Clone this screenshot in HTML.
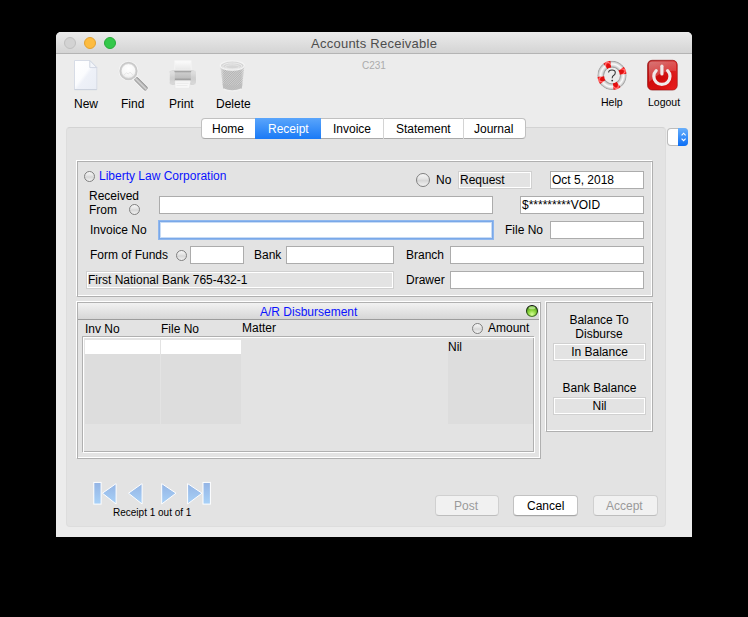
<!DOCTYPE html>
<html><head><meta charset="utf-8">
<style>
*{margin:0;padding:0;box-sizing:border-box}
html,body{width:748px;height:617px;background:#000;overflow:hidden;font-family:"Liberation Sans",sans-serif;font-size:12px;color:#000}
.a{position:absolute}
.t{position:absolute;white-space:nowrap;line-height:12px;font-size:12px}
.s10{font-size:10px;line-height:10px}
.inp{position:absolute;background:#fff;border:1px solid #acacac}
.fld{position:absolute;background:#e3e3e3;border:1px solid #d0d0d0;box-shadow:inset 0 0 0 1px #fff}
.radio{position:absolute;width:11px;height:11px;border-radius:50%;background:linear-gradient(#f6f6f6 0%,#e4e4e4 40%,#d6d6d6 55%,#e6e6e6 80%,#f0f0f0 100%);border:1px solid #808080}
.w{position:absolute;border:1px solid #fff}
.g{position:absolute;border:1px solid #b0b0b0}
.btn{position:absolute;height:20px;border-radius:4px;background:#fff;border:1px solid #c2c2c2;border-bottom-color:#a6a6a6;box-shadow:0 0.5px 0.5px rgba(0,0,0,0.1)}
.dis{background:#f1f1f1;border-color:#d0d0d0;border-bottom-color:#bdbdbd;box-shadow:none}
</style></head>
<body>
<!-- window -->
<div class="a" style="left:56px;top:32px;width:636px;height:505px;background:#ececec;border-radius:5px 5px 0 0;"></div>
<div class="a" style="left:56px;top:32px;width:636px;height:22px;background:linear-gradient(#ebebeb,#d4d4d4);border-bottom:1px solid #b4b4b4;border-radius:5px 5px 0 0"></div>
<div class="a" style="left:64px;top:37px;width:12px;height:12px;border-radius:50%;background:#d3d3d3;border:1px solid #c0c0c0"></div>
<div class="a" style="left:84px;top:37px;width:12px;height:12px;border-radius:50%;background:#fdbc40;border:1px solid #e3a231"></div>
<div class="a" style="left:104px;top:37px;width:12px;height:12px;border-radius:50%;background:#34c84a;border:1px solid #28ab39"></div>
<div class="t" style="left:311px;top:37px;font-size:13px;line-height:13px;color:#4d4d4d;letter-spacing:0.25px">Accounts Receivable</div>
<div class="t s10" style="left:362px;top:61px;color:#ababab">C231</div>

<!-- toolbar labels -->
<div class="t" style="left:74px;top:98px">New</div>
<div class="t" style="left:121px;top:98px">Find</div>
<div class="t" style="left:169px;top:98px">Print</div>
<div class="t" style="left:216px;top:98px">Delete</div>
<div class="t" style="left:601px;top:97px;font-size:10.5px;line-height:10px">Help</div>
<div class="t" style="left:648px;top:97px;font-size:10.5px;line-height:10px">Logout</div>

<!-- inner panel -->
<div class="a" style="left:66px;top:127px;width:600px;height:400px;background:#e3e3e3;border:1px solid #dddddd;border-top-color:#d3d3d3;border-radius:4px"></div>

<!-- popup stepper at right -->
<div class="a" style="left:667px;top:128px;width:21px;height:18px;border-radius:4px;background:#bcbcbc;overflow:hidden">
  <div class="a" style="left:1px;top:1px;width:12px;height:16px;border-radius:3px 0 0 3px;background:#fff"></div>
  <div class="a" style="left:11px;top:0;width:10px;height:18px;background:linear-gradient(#6ab0fb,#0a6ef6)"></div>
  <svg class="a" style="left:11px;top:0" width="10" height="18"><path d="M3.6,7.3 L5.6,5.2 L7.6,7.3 M3.6,10.6 L5.6,12.7 L7.6,10.6" fill="none" stroke="#fff" stroke-width="1.1"/></svg>
</div>

<!-- segmented control -->
<div class="a" style="left:201px;top:118px;width:325px;height:21px;background:#fff;border-radius:4px;border:1px solid #c0c0c0;border-bottom-color:#a9a9a9"></div>
<div class="a" style="left:255px;top:118px;width:66px;height:21px;background:linear-gradient(#5aa5fb,#1a7af6)"></div>
<div class="a" style="left:383px;top:118px;width:1px;height:21px;background:#d4d4d4"></div>
<div class="a" style="left:463px;top:118px;width:1px;height:21px;background:#d4d4d4"></div>
<div class="t" style="left:212px;top:123px">Home</div>
<div class="t" style="left:268px;top:123px;color:#fff">Receipt</div>
<div class="t" style="left:333px;top:123px">Invoice</div>
<div class="t" style="left:396px;top:123px">Statement</div>
<div class="t" style="left:474px;top:123px">Journal</div>

<!-- group box 1 -->
<div class="w" style="left:76px;top:160px;width:576px;height:136px"></div>
<div class="g" style="left:77px;top:161px;width:576px;height:136px"></div>

<div class="radio" style="left:84px;top:171px"></div>
<div class="t" style="left:99px;top:170px;color:#0a14ff">Liberty Law Corporation</div>
<div class="radio" style="left:416px;top:173px;width:14px;height:14px"></div>
<div class="t" style="left:436px;top:174px">No</div>
<div class="fld" style="left:458px;top:171px;width:74px;height:18px"></div>
<div class="t" style="left:460px;top:174px">Request</div>
<div class="inp" style="left:550px;top:171px;width:94px;height:18px"></div>
<div class="t" style="left:552px;top:174px">Oct 5, 2018</div>

<div class="t" style="left:89px;top:190px">Received</div>
<div class="t" style="left:89px;top:204px">From</div>
<div class="radio" style="left:129px;top:204px"></div>
<div class="inp" style="left:159px;top:196px;width:334px;height:18px"></div>
<div class="inp" style="left:520px;top:196px;width:124px;height:18px"></div>
<div class="t" style="left:522px;top:199px">$*********VOID</div>

<div class="t" style="left:90px;top:224px">Invoice No</div>
<div class="inp" style="left:159px;top:221px;width:334px;height:18px;border-color:#7aa8e8;box-shadow:0 0 0 1px #8fb7ee,inset 0 0 0 1px #c8dcf6"></div>
<div class="t" style="left:505px;top:224px">File No</div>
<div class="inp" style="left:550px;top:221px;width:94px;height:18px"></div>

<div class="t" style="left:90px;top:249px">Form of Funds</div>
<div class="radio" style="left:176px;top:250px"></div>
<div class="inp" style="left:190px;top:246px;width:54px;height:18px"></div>
<div class="t" style="left:254px;top:249px">Bank</div>
<div class="inp" style="left:286px;top:246px;width:108px;height:18px"></div>
<div class="t" style="left:406px;top:249px">Branch</div>
<div class="inp" style="left:450px;top:246px;width:194px;height:18px"></div>

<div class="fld" style="left:86px;top:271px;width:308px;height:18px"></div>
<div class="t" style="left:88px;top:274px">First National Bank 765-432-1</div>
<div class="t" style="left:406px;top:274px">Drawer</div>
<div class="inp" style="left:450px;top:271px;width:194px;height:18px"></div>

<!-- A/R box -->
<div class="w" style="left:76px;top:301px;width:464px;height:157px"></div>
<div class="g" style="left:77px;top:302px;width:464px;height:157px"></div>
<div class="a" style="left:78px;top:303px;width:461px;height:17px;background:linear-gradient(#f2f2f2,#d6d6d6);border-bottom:1px solid #9c9c9c"></div>
<div class="t" style="left:260px;top:306px;color:#0a14ff">A/R Disbursement</div>
<svg class="a" style="left:525px;top:304px" width="14" height="14" viewBox="0 0 14 14">
 <defs>
  <radialGradient id="led" cx="0.5" cy="0.8" r="0.75"><stop offset="0" stop-color="#d6ff98"/><stop offset="0.45" stop-color="#8fd840"/><stop offset="1" stop-color="#4a9a18"/></radialGradient>
  <linearGradient id="ledb" x1="0" y1="0" x2="0" y2="1"><stop offset="0" stop-color="#111"/><stop offset="0.6" stop-color="#2a4a1a"/><stop offset="1" stop-color="#4a7a30"/></linearGradient>
 </defs>
 <circle cx="7" cy="7" r="5.5" fill="url(#led)" stroke="url(#ledb)" stroke-width="1.1"/>
 <ellipse cx="7" cy="3.7" rx="3.3" ry="1.5" fill="#eaffd0" opacity="0.55"/>
</svg>
<div class="t" style="left:85px;top:323px">Inv No</div>
<div class="t" style="left:161px;top:323px">File No</div>
<div class="t" style="left:242px;top:322px">Matter</div>
<div class="radio" style="left:472px;top:323px"></div>
<div class="t" style="left:488px;top:322px">Amount</div>

<div class="g" style="left:82px;top:336px;width:452px;height:116px"></div>
<div class="w" style="left:83px;top:337px;width:452px;height:116px"></div>
<div class="a" style="left:85px;top:340px;width:75px;height:84px;background:#dddddd"></div>
<div class="a" style="left:161px;top:340px;width:80px;height:84px;background:#dddddd"></div>
<div class="a" style="left:85px;top:340px;width:75px;height:14px;background:#fff"></div>
<div class="a" style="left:161px;top:340px;width:80px;height:14px;background:#fff"></div>
<div class="a" style="left:448px;top:340px;width:85px;height:84px;background:#dddddd"></div>
<div class="t" style="left:448px;top:341px">Nil</div>

<!-- balance box -->
<div class="w" style="left:545px;top:301px;width:107px;height:130px"></div>
<div class="g" style="left:546px;top:302px;width:107px;height:130px"></div>
<div class="t" style="left:553px;top:314px;width:92px;text-align:center">Balance To</div>
<div class="t" style="left:553px;top:328px;width:92px;text-align:center">Disburse</div>
<div class="fld" style="left:553px;top:343px;width:93px;height:18px"></div>
<div class="t" style="left:553px;top:346px;width:93px;text-align:center">In Balance</div>
<div class="t" style="left:553px;top:382px;width:93px;text-align:center">Bank Balance</div>
<div class="fld" style="left:553px;top:397px;width:93px;height:18px"></div>
<div class="t" style="left:553px;top:400px;width:93px;text-align:center">Nil</div>


<!-- ICONS -->
<svg class="a" style="left:72px;top:58px" width="28" height="34" viewBox="0 0 28 34">
 <defs>
  <linearGradient id="pg" x1="0" y1="0" x2="1" y2="1">
   <stop offset="0" stop-color="#ffffff"/><stop offset="0.45" stop-color="#fbfcfe"/><stop offset="0.55" stop-color="#eef1f8"/><stop offset="1" stop-color="#e9edf5"/>
  </linearGradient>
 </defs>
 <path d="M2.5,2.5 H17.8 L24.8,9.6 V31.6 H2.5 Z" fill="url(#pg)" stroke="#d7dce6" stroke-width="1"/>
 <path d="M2.5,31.6 H24.8" stroke="#cbd1dc" stroke-width="1"/>
 <path d="M17.8,2.5 V9.6 H24.8 Z" fill="#f3f5fa" stroke="#d0d6e2" stroke-width="1" stroke-linejoin="round"/>
</svg>

<svg class="a" style="left:116px;top:58px" width="34" height="36" viewBox="0 0 34 36">
 <defs>
  <radialGradient id="lens" cx="0.5" cy="0.35" r="0.65">
   <stop offset="0" stop-color="#ffffff"/><stop offset="0.6" stop-color="#f7f7f7"/><stop offset="1" stop-color="#e6e6e6"/>
  </radialGradient>
  <linearGradient id="hdl" x1="0" y1="0" x2="1" y2="0">
   <stop offset="0" stop-color="#9c9c9c"/><stop offset="0.45" stop-color="#d2d2d2"/><stop offset="0.7" stop-color="#bdbdbd"/><stop offset="1" stop-color="#8e8e8e"/>
  </linearGradient>
 </defs>
 <g transform="translate(19.6 20.4) rotate(-45)">
  <rect x="-3" y="-1.5" width="6" height="18" rx="2.4" fill="#f6f6f6"/>
  <rect x="-2.1" y="-0.5" width="4.2" height="16.3" rx="1.8" fill="url(#hdl)" stroke="#8f8f8f" stroke-width="0.5"/>
 </g>
 <circle cx="12.5" cy="13" r="9.8" fill="#f8f8f8"/>
 <circle cx="12.5" cy="13" r="8.3" fill="url(#lens)" stroke="#c9c9c9" stroke-width="1.7"/>
 <circle cx="12.5" cy="13" r="7.3" fill="none" stroke="#c8c8c8" stroke-width="0.6"/>
 <path d="M7.5,17.5 L10.5,14.8 L12.3,16 L14,14.2 L17.5,17.5" fill="none" stroke="#e4e4e4" stroke-width="0.9"/>
</svg>

<svg class="a" style="left:166px;top:58px" width="34" height="34" viewBox="0 0 34 34">
 <defs>
  <linearGradient id="ptop" x1="0" y1="0" x2="0" y2="1"><stop offset="0" stop-color="#fcfcfc"/><stop offset="1" stop-color="#e4e4e4"/></linearGradient>
  <linearGradient id="pbody" x1="0" y1="0" x2="0" y2="1">
   <stop offset="0" stop-color="#d0d0d0"/><stop offset="0.1" stop-color="#a6a6a6"/><stop offset="0.2" stop-color="#cbcbcb"/><stop offset="0.5" stop-color="#bfbfbf"/><stop offset="0.64" stop-color="#9f9f9f"/><stop offset="0.76" stop-color="#bcbcbc"/><stop offset="1" stop-color="#c6c6c6"/>
  </linearGradient>
  <linearGradient id="pcap" x1="0" y1="0" x2="0" y2="1"><stop offset="0" stop-color="#e6e6e6"/><stop offset="0.5" stop-color="#d2d2d2"/><stop offset="1" stop-color="#dcdcdc"/></linearGradient>
 </defs>
 <rect x="8.8" y="2.8" width="16.3" height="10.5" fill="url(#ptop)" stroke="#f6f6f6" stroke-width="0.8"/>
 <rect x="3.5" y="12" width="26.5" height="15" rx="2.8" fill="url(#pbody)" stroke="#f0f0f0" stroke-width="0.8"/>
 <rect x="3.8" y="12.5" width="5" height="14" rx="2.2" fill="url(#pcap)" opacity="0.9"/>
 <rect x="24.8" y="12.5" width="5" height="14" rx="2.2" fill="url(#pcap)" opacity="0.9"/>
 <path d="M9,22.8 H24.5 L23.5,30.3 H9 Z" fill="#f8f8f8" stroke="#e8e8e8" stroke-width="0.8"/>
 <path d="M10.5,25.3 H22.5 M10.5,27.6 H21.5" stroke="#e0e0e0" stroke-width="0.6"/>
</svg>

<svg class="a" style="left:217px;top:58px" width="30" height="36" viewBox="0 0 30 36">
 <defs>
  <pattern id="mesh" width="1.6" height="1.6" patternUnits="userSpaceOnUse" patternTransform="rotate(45)">
   <rect width="1.6" height="1.6" fill="#cdcdcd"/><rect width="0.7" height="1.6" fill="#aaaaaa"/>
  </pattern>
  <linearGradient id="tshade" x1="0" y1="0" x2="1" y2="0"><stop offset="0" stop-color="#fff" stop-opacity="0.5"/><stop offset="0.15" stop-color="#fff" stop-opacity="0.05"/><stop offset="0.85" stop-color="#fff" stop-opacity="0.05"/><stop offset="1" stop-color="#fff" stop-opacity="0.45"/></linearGradient>
 </defs>
 <path d="M3.4,8 L6.2,31 Q15,35 24.8,31 L27.3,8 Z" fill="url(#mesh)"/>
 <path d="M3.4,8 L6.2,31 Q15,35 24.8,31 L27.3,8 Z" fill="url(#tshade)"/>
 <path d="M5.8,25.5 Q15,29.5 25.3,25.5 L24.8,31 Q15,35 6.2,31 Z" fill="#bcbcbc" opacity="0.75"/>
 <path d="M6.2,31 Q15,35 24.8,31" fill="none" stroke="#f0f0f0" stroke-width="1.4"/>
 <ellipse cx="15.3" cy="7.6" rx="12" ry="4.6" fill="#d6d6d6" stroke="#f4f4f4" stroke-width="1.2"/>
 <ellipse cx="15.3" cy="8.2" rx="9.6" ry="3.2" fill="none" stroke="#f0f0f0" stroke-width="0.8"/>
 <ellipse cx="15.3" cy="8.8" rx="7" ry="2" fill="none" stroke="#ececec" stroke-width="0.7"/>
</svg>

<svg class="a" style="left:595px;top:58px" width="34" height="34" viewBox="0 0 34 34">
 <defs>
  <radialGradient id="ring" cx="0.5" cy="0.5" r="0.5">
   <stop offset="0.55" stop-color="#8f8f8f"/><stop offset="0.64" stop-color="#d0d0d0"/><stop offset="0.78" stop-color="#fbfbfb"/><stop offset="0.9" stop-color="#d2d2d2"/><stop offset="1" stop-color="#8d8d8d"/>
  </radialGradient>
  <radialGradient id="ringr" cx="0.5" cy="0.5" r="0.5">
   <stop offset="0.55" stop-color="#e01010"/><stop offset="0.64" stop-color="#ff3030"/><stop offset="0.78" stop-color="#ff8080"/><stop offset="0.9" stop-color="#ff3535"/><stop offset="1" stop-color="#e02020"/>
  </radialGradient>
  <mask id="hole"><circle cx="17" cy="17.4" r="14.6" fill="#fff"/><circle cx="17" cy="17.4" r="8" fill="#000"/></mask>
 </defs>
 <g mask="url(#hole)">
  <circle cx="17" cy="17.4" r="14.6" fill="url(#ring)"/>
  <g fill="url(#ringr)">
   <path d="M17,17.4 L32.1,13.4 A15.6,15.6 0 0 1 32.1,21.4 Z" transform="rotate(-21 17 17.4)"/>
   <path d="M17,17.4 L32.1,13.4 A15.6,15.6 0 0 1 32.1,21.4 Z" transform="rotate(69 17 17.4)"/>
   <path d="M17,17.4 L32.1,13.4 A15.6,15.6 0 0 1 32.1,21.4 Z" transform="rotate(159 17 17.4)"/>
   <path d="M17,17.4 L32.1,13.4 A15.6,15.6 0 0 1 32.1,21.4 Z" transform="rotate(249 17 17.4)"/>
  </g>
 </g>
 <path d="M13.6,14.6 Q13.6,12 17,12 Q20.3,12 20.3,14.8 Q20.3,16.6 18.2,17.8 Q17.2,18.5 17.2,20.2" fill="none" stroke="#333" stroke-width="1.05"/>
 <circle cx="17.2" cy="22.6" r="0.9" fill="#2e2e2e"/>
</svg>

<svg class="a" style="left:645px;top:58px" width="34" height="34" viewBox="0 0 34 34">
 <defs>
  <linearGradient id="lg" x1="0" y1="0" x2="0" y2="1">
   <stop offset="0" stop-color="#c93535"/><stop offset="0.6" stop-color="#cc0a0a"/><stop offset="1" stop-color="#d81010"/>
  </linearGradient>
  <linearGradient id="gloss" x1="0" y1="0" x2="1" y2="1">
   <stop offset="0" stop-color="#fff" stop-opacity="0.35"/><stop offset="1" stop-color="#fff" stop-opacity="0.05"/>
  </linearGradient>
 </defs>
 <rect x="2.6" y="2.3" width="29.6" height="29.7" rx="4.5" fill="url(#lg)" stroke="#8e1010" stroke-width="0.7"/>
 <linearGradient id="lr" x1="0" y1="0" x2="1" y2="0.3"><stop offset="0" stop-color="#700" stop-opacity="0.18"/><stop offset="0.5" stop-color="#f00" stop-opacity="0"/><stop offset="1" stop-color="#ff3030" stop-opacity="0.35"/></linearGradient>
 <rect x="2.6" y="2.3" width="29.6" height="29.7" rx="4.5" fill="url(#lr)"/>
 <path d="M4,6.5 Q4,3.5 7,3.5 H28 Q31,3.5 31,6.5 V13 Q18,11 4,24 Z" fill="url(#gloss)"/>
 <path d="M11.2,12.6 A8.1,8.1 0 1 0 22.6,12.6" fill="none" stroke="#efe9e9" stroke-width="3.2" stroke-linecap="round"/>
 <path d="M16.9,8.2 V16" fill="none" stroke="#efe9e9" stroke-width="3.2" stroke-linecap="round"/>
</svg>

<!-- nav arrows -->
<svg class="a" style="left:90px;top:479px" width="125" height="29" viewBox="0 0 125 29">
 <defs>
  <linearGradient id="nb" x1="0" y1="0" x2="0" y2="1"><stop offset="0" stop-color="#94b4e4"/><stop offset="1" stop-color="#a9d2f8"/></linearGradient>
 </defs>
 <g fill="url(#nb)" stroke="#ffffff" stroke-width="1">
  <rect x="3.8" y="3.4" width="7.3" height="21.7"/>
  <path d="M12.4,14.2 L26.1,4.6 V25 Z" stroke-linejoin="round"/>
  <path d="M38.5,14.2 L52.1,4.6 V25 Z" stroke-linejoin="round"/>
  <path d="M86,14.2 L71.7,4.6 V25 Z" stroke-linejoin="round"/>
  <path d="M112,14.2 L97.6,4.6 V25 Z" stroke-linejoin="round"/>
  <rect x="113" y="3.4" width="7.4" height="21.7"/>
 </g>
</svg>

<!-- nav -->
<div class="t s10" style="left:113px;top:508px">Receipt 1 out of 1</div>

<!-- buttons -->
<div class="btn dis" style="left:435px;top:495px;width:64px;height:21px"></div>
<div class="t" style="left:454px;top:500px;color:#9a9a9a">Post</div>
<div class="btn" style="left:513px;top:495px;width:65px;height:21px"></div>
<div class="t" style="left:527px;top:500px">Cancel</div>
<div class="btn dis" style="left:593px;top:495px;width:65px;height:21px"></div>
<div class="t" style="left:606px;top:500px;color:#9a9a9a">Accept</div>
</body></html>
